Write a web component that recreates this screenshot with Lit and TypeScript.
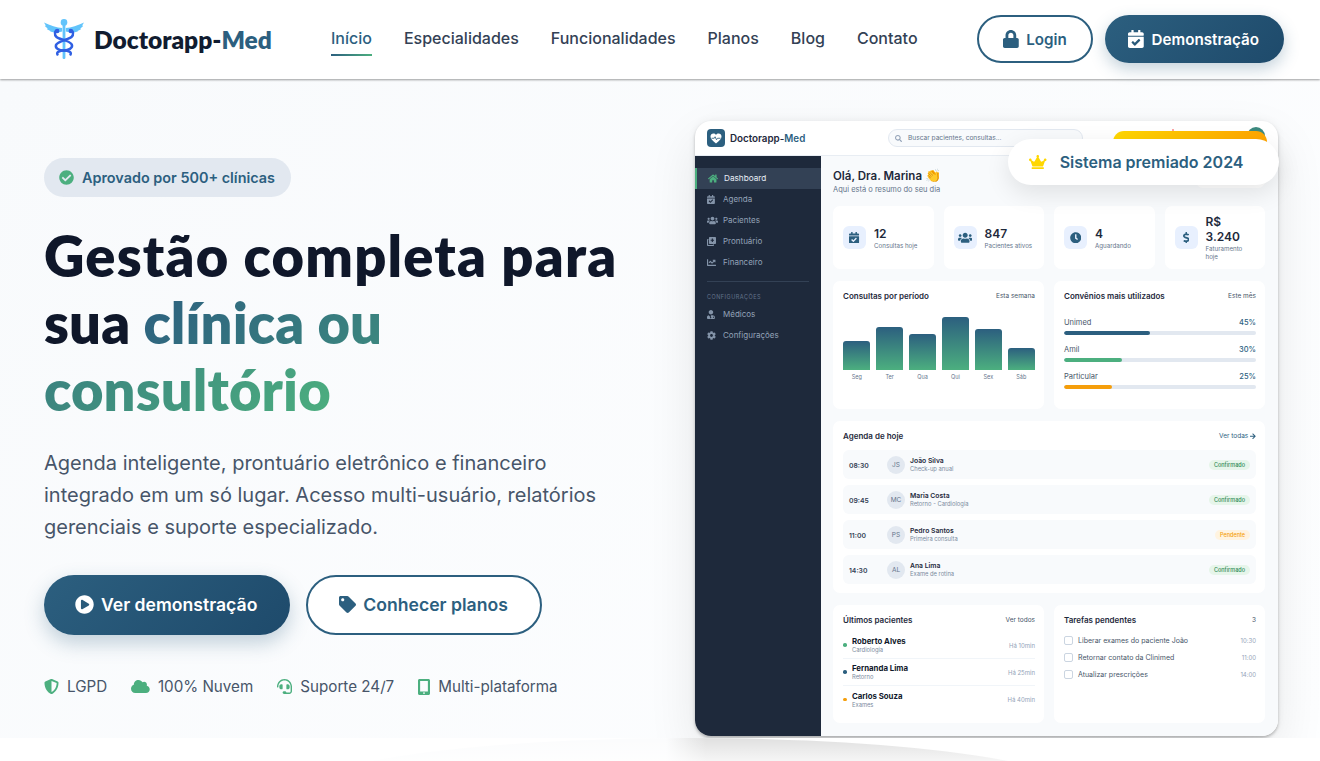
import { LitElement, html, css, svg } from "lit";
import { customElement } from "lit/decorators.js";

const P: Record<string, [string, string]> = {
  lock: ["0 0 448 512", "M400 224h-24v-72C376 68.2 307.8 0 224 0S72 68.2 72 152v72H48c-26.5 0-48 21.5-48 48v192c0 26.5 21.5 48 48 48h352c26.5 0 48-21.5 48-48V272c0-26.5-21.5-48-48-48zm-104 0H152v-72c0-39.7 32.3-72 72-72s72 32.3 72 72v72z"],
  cal: ["0 0 448 512", "M436 160H12c-6.627 0-12-5.373-12-12v-36c0-26.51 21.49-48 48-48h48V12c0-6.627 5.373-12 12-12h40c6.627 0 12 5.373 12 12v52h128V12c0-6.627 5.373-12 12-12h40c6.627 0 12 5.373 12 12v52h48c26.51 0 48 21.49 48 48v36c0 6.627-5.373 12-12 12zM12 192h424c6.627 0 12 5.373 12 12v260c0 26.51-21.49 48-48 48H48c-26.51 0-48-21.49-48-48V204c0-6.627 5.373-12 12-12zm333.296 95.947l-28.169-28.398c-4.667-4.705-12.265-4.736-16.97-.068L194.12 364.665l-45.98-46.352c-4.667-4.705-12.266-4.736-16.971-.068l-28.397 28.17c-4.705 4.667-4.736 12.265-.068 16.97l82.601 83.269c4.667 4.705 12.265 4.736 16.97.068l142.953-141.805c4.705-4.667 4.736-12.265.068-16.97z"],
  home: ["0 0 576 512", "M280.37 148.26L96 300.11V464a16 16 0 0 0 16 16l112.06-.29a16 16 0 0 0 15.92-16V368a16 16 0 0 1 16-16h64a16 16 0 0 1 16 16v95.64a16 16 0 0 0 16 16.05L464 480a16 16 0 0 0 16-16V300L295.67 148.26a12.19 12.19 0 0 0-15.3 0zM571.6 251.47L488 182.56V44.05a12 12 0 0 0-12-12h-56a12 12 0 0 0-12 12v72.61L318.47 43a48 48 0 0 0-61 0L4.34 251.47a12 12 0 0 0-1.6 16.9l25.5 31A12 12 0 0 0 45.15 301l235.22-193.74a12.19 12.19 0 0 1 15.3 0L530.9 301a12 12 0 0 0 16.9-1.6l25.5-31a12 12 0 0 0-1.7-16.93z"],
  users: ["0 0 640 512", "M96 224c35.3 0 64-28.7 64-64s-28.7-64-64-64-64 28.7-64 64 28.7 64 64 64zm448 0c35.3 0 64-28.7 64-64s-28.7-64-64-64-64 28.7-64 64 28.7 64 64 64zm32 32h-64c-17.6 0-33.5 7.1-45.1 18.6 40.3 22.1 68.9 62 75.1 109.4h66c17.7 0 32-14.3 32-32v-32c0-35.3-28.7-64-64-64zm-256 0c61.9 0 112-50.1 112-112S381.9 32 320 32 208 82.1 208 144s50.1 112 112 112zm76.8 32h-8.3c-20.8 10-43.9 16-68.5 16s-47.6-6-68.5-16h-8.3C179.6 288 128 339.6 128 403.2V432c0 26.5 21.5 48 48 48h288c26.5 0 48-21.5 48-48v-28.8c0-63.6-51.6-115.2-115.2-115.2zm-223.7-13.4C161.5 263.1 145.6 256 128 256H64c-35.3 0-64 28.7-64 64v32c0 17.7 14.3 32 32 32h65.9c6.3-47.4 34.9-87.3 75.2-109.4z"],
  clock: ["0 0 512 512", "M256,8C119,8,8,119,8,256S119,504,256,504,504,393,504,256,393,8,256,8Zm92.49,313h0l-20,25a16,16,0,0,1-22.49,2.5h0l-67-49.72a40,40,0,0,1-15-31.23V112a16,16,0,0,1,16-16h32a16,16,0,0,1,16,16V256l58,42.5A16,16,0,0,1,348.49,321Z"],
  dollar: ["0 0 288 512", "M209.2 233.4l-108-31.6C88.7 198.2 80 186.5 80 173.5c0-16.3 13.2-29.5 29.5-29.5h66.3c12.2 0 24.2 3.7 34.2 10.5 6.1 4.1 14.3 3.1 19.5-2l34.8-34c7.1-6.9 6.1-18.4-1.8-24.5C238 74.8 207.4 64.1 176 64V16c0-8.8-7.2-16-16-16h-32c-8.8 0-16 7.2-16 16v48h-2.5C45.8 64-5.4 118.7.5 183.6c4.2 46.1 39.4 83.6 83.8 96.6l102.5 30c12.5 3.7 21.2 15.3 21.2 28.3 0 16.3-13.2 29.5-29.5 29.5h-66.3C100 368 88 364.3 78 357.5c-6.1-4.1-14.3-3.1-19.5 2l-34.8 34c-7.1 6.9-6.1 18.4 1.8 24.5 24.5 19.2 55.1 29.9 86.5 30v48c0 8.8 7.2 16 16 16h32c8.8 0 16-7.2 16-16v-48.2c46.6-.9 90.3-28.6 105.7-72.7 21.5-61.6-14.6-124.8-72.5-141.7z"],
  check: ["0 0 512 512", "M504 256c0 136.967-111.033 248-248 248S8 392.967 8 256 119.033 8 256 8s248 111.033 248 248zM227.314 387.314l184-184c6.248-6.248 6.248-16.379 0-22.627l-22.627-22.627c-6.248-6.249-16.379-6.249-22.628 0L216 308.118l-70.059-70.059c-6.248-6.248-16.379-6.248-22.628 0l-22.627 22.627c-6.248 6.248-6.248 16.379 0 22.627l104 104c6.249 6.249 16.379 6.249 22.628.001z"],
  play: ["0 0 512 512", "M256 8C119 8 8 119 8 256s111 248 248 248 248-111 248-248S393 8 256 8zm115.7 272l-176 101c-15.8 8.8-35.7-2.5-35.7-21V152c0-18.4 19.8-29.8 35.7-21l176 107c16.4 9.2 16.4 32.9 0 42z"],
  tag: ["0 0 512 512", "M0 252.118V48C0 21.49 21.49 0 48 0h204.118a48 48 0 0 1 33.941 14.059l211.882 211.882c18.745 18.745 18.745 49.137 0 67.882L293.823 497.941c-18.745 18.745-49.137 18.745-67.882 0L14.059 286.059A48 48 0 0 1 0 252.118zM112 64c-26.51 0-48 21.49-48 48s21.49 48 48 48 48-21.49 48-48-21.49-48-48-48z"],
  cloud: ["0 0 640 512", "M537.6 226.6c4.1-10.7 6.4-22.4 6.4-34.6 0-53-43-96-96-96-19.7 0-38.1 6-53.3 16.2C367 64.2 315.3 32 256 32c-88.4 0-160 71.6-160 160 0 2.7.1 5.4.2 8.1C40.2 219.8 0 273.2 0 336c0 79.5 64.5 144 144 144h368c70.7 0 128-57.3 128-128 0-61.9-44-113.6-102.4-125.4z"],
  crown: ["0 0 640 512", "M528 448H112c-8.8 0-16 7.2-16 16v32c0 8.8 7.2 16 16 16h416c8.8 0 16-7.2 16-16v-32c0-8.8-7.2-16-16-16zm64-320c-26.5 0-48 21.5-48 48 0 7.1 1.6 13.7 4.4 19.8L476 239.2c-15.4 9.2-35.3 4-44.2-11.6L350.3 85C361 76.2 368 63 368 48c0-26.5-21.5-48-48-48s-48 21.5-48 48c0 15 7 28.2 17.7 37l-81.5 142.6c-8.9 15.6-28.9 20.8-44.2 11.6l-72.3-43.4c2.7-6 4.4-12.7 4.4-19.8 0-26.5-21.5-48-48-48S0 149.5 0 176s21.5 48 48 48c2.6 0 5.2-.4 7.7-.8L128 416h384l72.3-192.8c2.5.4 5.1.8 7.7.8 26.5 0 48-21.5 48-48s-21.5-48-48-48z"],
  mobile: ["0 0 384 512", "M48 0h288c26.5 0 48 21.5 48 48v416c0 26.5-21.5 48-48 48H48c-26.5 0-48-21.5-48-48V48C0 21.5 21.5 0 48 0zm20 60v340h248V60zM192 420a28 28 0 1 0 0 56 28 28 0 1 0 0-56z"],
  headset: ["0 0 512 512", "M192 208c0-17.67-14.33-32-32-32h-16c-35.35 0-64 28.65-64 64v48c0 35.35 28.65 64 64 64h16c17.67 0 32-14.33 32-32V208zm176 144c35.35 0 64-28.65 64-64v-48c0-35.35-28.65-64-64-64h-16c-17.67 0-32 14.33-32 32v112c0 17.67 14.33 32 32 32h16zM256 0C113.18 0 4.58 118.83 0 256v16c0 8.84 7.16 16 16 16h16c8.84 0 16-7.16 16-16v-16c0-114.69 93.31-208 208-208s208 93.31 208 208h-.12c.08 2.43.12 165.72.12 165.72 0 23.35-18.93 42.28-42.28 42.28H320c0-26.51-21.49-48-48-48h-32c-26.51 0-48 21.49-48 48s21.49 48 48 48h181.72c49.86 0 90.28-40.42 90.28-90.28V256C507.42 118.83 398.82 0 256 0z"],
  shield: ["0 0 512 512", "M466.5 83.7l-192-80a48.15 48.15 0 0 0-36.9 0l-192 80C27.7 91.1 16 108.6 16 128c0 198.5 114.5 335.7 221.5 380.3 11.8 4.9 25.1 4.9 36.9 0C360.1 472.6 496 349.3 496 128c0-19.4-11.7-36.9-29.5-44.3zM256.1 446.3l-.1-381 175.9 73.3c-3.3 151.4-82.1 261.1-175.8 307.7z"],
  chart: ["0 0 512 512", "M496 384H64V80c0-8.84-7.16-16-16-16H16C7.16 64 0 71.16 0 80v336c0 17.67 14.33 32 32 32h464c8.84 0 16-7.16 16-16v-32c0-8.84-7.16-16-16-16zM464 96H345.94c-21.38 0-32.09 25.85-16.97 40.97l32.4 32.4L288 242.75l-73.37-73.37c-12.5-12.5-32.76-12.5-45.25 0l-68.69 68.69c-6.25 6.25-6.25 16.38 0 22.63l22.62 22.62c6.25 6.25 16.38 6.25 22.63 0L192 237.25l73.37 73.37c12.5 12.5 32.76 12.5 45.25 0l96-96 32.4 32.4c15.12 15.12 40.97 4.41 40.97-16.97V112c.01-8.84-7.16-16-15.99-16z"],
  cog: ["0 0 512 512", "M487.4 315.7l-42.6-24.6c4.3-23.2 4.3-47 0-70.2l42.6-24.6c4.9-2.8 7.1-8.6 5.5-14-11.1-35.6-30-67.8-54.7-94.6-3.8-4.1-10-5.1-14.8-2.3L380.8 110c-17.9-15.4-38.5-27.3-60.8-35.1V25.8c0-5.6-3.9-10.5-9.4-11.7-36.7-8.2-74.3-7.8-109.2 0-5.5 1.2-9.4 6.1-9.4 11.7V75c-22.2 7.9-42.8 19.8-60.8 35.1L88.7 85.5c-4.9-2.8-11-1.9-14.8 2.3-24.7 26.7-43.6 58.9-54.7 94.6-1.7 5.4.6 11.2 5.5 14L67.3 221c-4.3 23.2-4.3 47 0 70.2l-42.6 24.6c-4.9 2.8-7.1 8.6-5.5 14 11.1 35.6 30 67.8 54.7 94.6 3.8 4.1 10 5.1 14.8 2.3l42.6-24.6c17.9 15.4 38.5 27.3 60.8 35.1v49.2c0 5.6 3.9 10.5 9.4 11.7 36.7 8.2 74.3 7.8 109.2 0 5.5-1.2 9.4-6.1 9.4-11.7v-49.2c22.2-7.9 42.8-19.8 60.8-35.1l42.6 24.6c4.9 2.8 11 1.9 14.8-2.3 24.7-26.7 43.6-58.9 54.7-94.6 1.5-5.5-.7-11.3-5.6-14.1zM256 336c-44.1 0-80-35.9-80-80s35.9-80 80-80 80 35.9 80 80-35.9 80-80 80z"],
  search: ["0 0 512 512", "M505 442.7L405.3 343c-4.5-4.5-10.6-7-17-7H372c27.6-35.3 44-79.7 44-128C416 93.1 322.9 0 208 0S0 93.1 0 208s93.1 208 208 208c48.3 0 92.7-16.4 128-44v16.3c0 6.4 2.5 12.5 7 17l99.7 99.7c9.4 9.4 24.6 9.4 33.9 0l28.3-28.3c9.4-9.4 9.4-24.6.1-34zM208 336c-70.7 0-128-57.2-128-128 0-70.7 57.2-128 128-128 70.7 0 128 57.2 128 128 0 70.7-57.2 128-128 128z"],
  arrow: ["0 0 448 512", "M190.5 66.9l22.2-22.2c9.4-9.4 24.6-9.4 33.9 0L441 239c9.4 9.4 9.4 24.6 0 33.9L246.6 467.3c-9.4 9.4-24.6 9.4-33.9 0l-22.2-22.2c-9.5-9.5-9.3-25 .4-34.3L311.4 296H24c-13.3 0-24-10.7-24-24v-32c0-13.3 10.7-24 24-24h287.4L190.9 101.2c-9.8-9.3-10-24.8-.4-34.3z"],
  doctor: ["0 0 448 512", "M224 256c70.7 0 128-57.3 128-128S294.7 0 224 0 96 57.3 96 128s57.3 128 128 128zM96 300C40 312 0 360 0 416v48c0 26.5 21.5 48 48 48h352c26.5 0 48-21.5 48-48v-48c0-56-40-104-96-116v52c30 8 48 34 48 62v26h-64v-26c0-18 14-32 32-32v-82c-40-6-100-6-144 0v96a40 40 0 1 1-32 0z"],
  notes: ["0 0 512 512", "M160 0h304c26.5 0 48 21.5 48 48v304c0 26.5-21.5 48-48 48H160c-26.5 0-48-21.5-48-48V48c0-26.5 21.5-48 48-48zm112 88v64h-64v64h64v64h64v-64h64v-64h-64V88zM0 160c0-26.5 21.5-48 48-48h32v64H64v272h272v-16h64v32c0 26.5-21.5 48-48 48H48c-26.5 0-48-21.5-48-48z"],
};

const ic = (n: string, cls = "") =>
  html`<svg class="i ${cls}" viewBox=${P[n][0]} aria-hidden="true"><path fill="currentColor" fill-rule="evenodd" d=${P[n][1]}></path></svg>`;

const caduceus = html`<svg class="cad" viewBox="0 0 40 40" aria-hidden="true">
  ${svg`
  <path fill="#62c4fb" d="M18.2 9 C13 8.6 6 6 0 3.4 L1.8 6.6 L0.8 7 L3.6 9.6 L3 10.2 L6.4 12 L6.2 12.6 L10.2 13.6 C12.5 14 15.5 13.5 18.2 12.6Z"/>
  <path fill="#62c4fb" d="M21.8 9 C27 8.6 34 6 40 3.4 L38.2 6.6 L39.2 7 L36.4 9.6 L37 10.2 L33.6 12 L33.8 12.6 L29.8 13.6 C27.5 14 24.5 13.5 21.8 12.6Z"/>
  <circle cx="20" cy="3.4" r="3.3" fill="#62c4fb"/>
  <rect x="18.6" y="5" width="2.8" height="35" rx="1.2" fill="#62c4fb"/>
  <path fill="none" stroke="#2f5fe3" stroke-width="2.5" stroke-linecap="round" d="M13.5 11.5 C10.5 11 10.2 16 12.5 18 C15 20.3 26 21.3 27.8 25.6 C29.3 29.2 24 31.5 20 31.5 C15 31.5 11 29.5 12 26 C13.2 22.3 25 20.3 27.5 18 C29.8 16 29.5 11 26.5 11.5"/>
  <path fill="none" stroke="#2f5fe3" stroke-width="2.5" stroke-linecap="round" d="M20 31.5 C24 31.5 28 33 26.5 35.5 M20 31.5 C16 31.5 12 33 13.5 35.5"/>
  <circle cx="13.2" cy="12" r="2.2" fill="#2f5fe3"/><circle cx="26.8" cy="12" r="2.2" fill="#2f5fe3"/>
  `}
</svg>`;

const heart = html`<svg class="heart" viewBox="0 0 24 22" aria-hidden="true">
  ${svg`<path fill="#fff" d="M12 21 C5 15.5 1 11.5 1 7 C1 3.5 3.6 1 6.8 1 C8.9 1 10.8 2 12 3.8 C13.2 2 15.1 1 17.2 1 C20.4 1 23 3.5 23 7 C23 11.5 19 15.5 12 21Z"/>
  <path fill="none" stroke="#2c5f7f" stroke-width="1.7" stroke-linejoin="round" d="M3 10.5 H8.5 L10.2 7.5 L13 13.5 L15 10.5 H21"/>`}
</svg>`;

const bars = [
  ["Seg", 29], ["Ter", 43], ["Qua", 36], ["Qui", 53], ["Sex", 41], ["Sáb", 22],
] as const;
const convs = [
  ["Unimed", 45, "#2c5f7f"], ["Amil", 30, "#4caf7f"], ["Particular", 25, "#f59e0b"],
] as const;
const agenda = [
  ["08:30", "JS", "João Silva", "Check-up anual", "Confirmado", "ok"],
  ["09:45", "MC", "Maria Costa", "Retorno - Cardiologia", "Confirmado", "ok"],
  ["11:00", "PS", "Pedro Santos", "Primeira consulta", "Pendente", "wait"],
  ["14:30", "AL", "Ana Lima", "Exame de rotina", "Confirmado", "ok"],
] as const;
const patients = [
  ["Roberto Alves", "Cardiologia", "Há 10min", "#4caf7f"],
  ["Fernanda Lima", "Retorno", "Há 25min", "#2c5f7f"],
  ["Carlos Souza", "Exames", "Há 40min", "#f59e0b"],
] as const;
const tasks = [
  ["Liberar exames do paciente João", "10:30"],
  ["Retornar contato da Clinimed", "11:00"],
  ["Atualizar prescrições", "14:00"],
] as const;
const stats = [
  ["cal", "12", "Consultas hoje"],
  ["users", "847", "Pacientes ativos"],
  ["clock", "4", "Aguardando"],
  ["dollar", "R$ 3.240", "Faturamento hoje"],
] as const;
const side = [
  ["home", "Dashboard"], ["cal", "Agenda"], ["users", "Pacientes"], ["notes", "Prontuário"], ["chart", "Financeiro"],
] as const;

@customElement("app-root")
export class AppRoot extends LitElement {
  static styles = css`
    :host { display: block; height: 761px; overflow: hidden; background: #fff; font-family: Inter, "Noto Sans", sans-serif; color: #0f172a; }
    * { box-sizing: border-box; }
    .i { display: block; flex: none; height: 1em; width: auto; }
    .top { height: 79px; display: flex; align-items: center; padding: 0 36px 1px 44px; background: #fff; box-shadow: 0 1px 2px rgba(0,0,0,.38); position: relative; z-index: 3; }
    .brand { display: flex; align-items: center; gap: 10px; width: 228px; flex: none; font: 800 24.5px Lato, sans-serif; color: #111c30; white-space: nowrap; }
    .brand b { color: #2c5f7f; font-weight: 800; }
    .cad { width: 40px; height: 40px; flex: none; }
    .nav { margin: 0 0 2px 59px; display: flex; gap: 32px; font-size: 16px; font-weight: 500; color: #334155; }
    .nav a { position: relative; padding: 8px 0; line-height: 19px; }
    .nav a.on { color: #2c5f7f; }
    .nav a.on::after { content: ""; position: absolute; left: 0; right: 0; bottom: 0; height: 2px; background: linear-gradient(90deg,#2c5f7f,#4caf7f); }
    .acts { margin-left: auto; display: flex; gap: 12px; }
    .btn { display: flex; align-items: center; height: 48px; border-radius: 24px; font-size: 15.2px; font-weight: 600; }
    .btn .i { font-size: 18px; }
    .btn.line { border: 2px solid #2c5f7f; color: #2c5f7f; background: #fff; padding: 0 24px 0 24px; gap: 7px; }
    .btn.fill, .big.fill { background: linear-gradient(135deg,#2c5f7f,#1e4a6b); color: #fff; }
    .btn.fill { box-shadow: 0 6px 16px rgba(44,95,127,.28); padding: 0 25px 0 23px; gap: 8px; }

    .hero { height: 659px; display: grid; grid-template-columns: 1fr 583px; padding: 42px 42px 2px 44px; background: linear-gradient(135deg,#f8fafc,#fdfeff); overflow: hidden; position: relative; }
    .left { padding-top: 37px; display: flex; flex-direction: column; align-items: flex-start; }
    .pill { display: flex; align-items: center; gap: 8px; height: 39px; padding: 0 16px 0 15px; border-radius: 20px; background: #e2e8f0; color: #2c5f7f; font-size: 14.4px; font-weight: 600; }
    .pill .i { color: #4caf7f; font-size: 15px; }
    h1 { margin: 25px 0 0; font: 800 56px/67.2px Lato, sans-serif; color: #0f172a; letter-spacing: .15px; white-space: nowrap; }
    h1 .l1 { display: block; letter-spacing: 1.2px; }
    h1 .grad { background: linear-gradient(135deg,#2c5f7f,#4caf7f); -webkit-background-clip: text; background-clip: text; color: transparent; }
    .lead { margin: 23px 0 0; width: 570px; font-size: 20px; line-height: 32px; color: #475569; }
    .cta { display: flex; gap: 16px; margin-top: 32px; }
    .big { display: flex; align-items: center; height: 60px; border-radius: 30px; font-size: 17.6px; font-weight: 600; gap: 7px; }
    .big .i { font-size: 19px; }
    .big.fill { padding: 0 33px 0 31px; box-shadow: 0 8px 20px rgba(44,95,127,.28); }
    .big.line { border: 2px solid #2c5f7f; color: #2c5f7f; background: #fff; padding: 0 32px 0 31px; }
    .big.line .i { font-size: 17px; }
    .trust { display: flex; gap: 24px; margin-top: 42px; font-size: 15.2px; color: #475569; line-height: 20px; }
    .trust div { display: flex; align-items: center; gap: 8px; }
    .trust .i { color: #4caf7f; font-size: 15px; }
    .trust .i.m { font-size: 16px; }

    .wrap { position: relative; height: 615px; }
    .mock { height: 615px; border-radius: 16px; background: #fff; overflow: hidden; display: flex; flex-direction: column; box-shadow: 0 2px 3px rgba(0,0,0,.24), 0 0 8px rgba(0,0,0,.06), 0 20px 50px rgba(0,0,0,.09); font-size: 8px; }
    .award { position: absolute; z-index: 2; top: 18px; right: -1px; height: 46px; display: flex; align-items: center; gap: 13px; padding: 0 35.5px 1px 21px; background: #fff; border-radius: 23px; box-shadow: 0 8px 24px rgba(0,0,0,.1); color: #2c5f7f; font-size: 16px; font-weight: 600; white-space: nowrap; }
    .award .i { color: #ffd700; font-size: 14px; }
    .mtop { height: 35px; flex: none; display: flex; align-items: center; padding: 0 12px; border-bottom: 1px solid #e8edf3; position: relative; }
    .mlogo { width: 18px; height: 18px; border-radius: 4px; background: #2c5f7f; display: flex; align-items: center; justify-content: center; margin-right: 5px; }
    .heart { width: 12px; height: 11px; }
    .mname { font-size: 9.8px; font-weight: 600; color: #1e293b; width: 158px; white-space: nowrap; }
    .mname b { color: #2c5f7f; font-weight: 600; }
    .search { width: 195px; height: 18px; border: 1px solid #e2e8f0; border-radius: 9px; background: #f8fafc; display: flex; align-items: center; gap: 6px; padding: 0 6px; color: #64748b; font-size: 6.6px; }
    .search .i { font-size: 7px; color: #94a3b8; }
    .gold { margin-left: 30px; width: 154px; height: 22px; border-radius: 11px; background: linear-gradient(90deg,#ffd700,#ffa500); position: relative; z-index: 1; margin-top: 8px; flex: none; color: #fff; font-size: 7px; font-weight: 600; display: flex; align-items: center; justify-content: center; }
    .gold::before { content: ""; position: absolute; left: 59px; top: -2px; width: 2px; height: 2px; background: #fca5a5; }
    .ava { width: 18px; height: 18px; border-radius: 50%; background: #3d8a80; margin-left: -20px; flex: none; margin-top: -4px; }
    .mbody { flex: 1; display: flex; min-height: 0; }
    .sb { width: 126px; flex: none; background: #1e293b; padding-top: 12px; color: #94a3b8; font-size: 8px; }
    .si { height: 21px; display: flex; align-items: center; padding: 0 0 1px 12px; }
    .si .icb { width: 16px; flex: none; display: flex; justify-content: flex-start; }
    .si .i { font-size: 9px; color: #8494a9; max-width: 11px; }
    .si.on { background: #334155; color: #e8eef5; border-left: 2px solid #4caf7f; padding-left: 11px; font-size: 8.2px; }
    .si.on .i { color: #4caf7f; }
    .div { height: 1px; margin: 8px 12px 10px 12px; background: #334155; }
    .sl { height: 10px; line-height: 10px; padding-left: 12px; font-size: 5.5px; letter-spacing: .5px; color: #64748b; margin-bottom: 2px; }
    .main { flex: 1; min-width: 0; background: #f8fafc; padding: 13px 13px 0 12px; display: flex; flex-direction: column; gap: 12px; }
    .hi { height: 25px; display: flex; justify-content: space-between; }
    .hi h2 { margin: 0; font-size: 11.5px; line-height: 15px; font-weight: 600; color: #1e293b; }
    .hi h2 span { font-size: 13px; line-height: 13px; }
    .hi p { margin: 1px 0 0; font-size: 7.5px; line-height: 10px; color: #64748b; }
    .date { height: 15px; margin-top: 4px; padding: 0 6px; background: #fff; border-radius: 7px; font-size: 7px; line-height: 15px; color: #475569; }
    .stats { display: grid; grid-template-columns: repeat(4,1fr); gap: 10px; height: 63px; }
    .card { background: #fff; border-radius: 7px; }
    .stat { padding: 0 10px; display: flex; align-items: center; gap: 8px; }
    .sic { width: 23px; height: 23px; border-radius: 6px; background: #e8f0fe; color: #2c5f7f; display: flex; align-items: center; justify-content: center; flex: none; }
    .sic .i { font-size: 11.5px; }
    .num { font-size: 12px; line-height: 15px; font-weight: 600; color: #1e293b; }
    .lab { font-size: 6.2px; line-height: 8px; color: #64748b; margin-top: 1px; }
    .row2 { display: grid; grid-template-columns: 1fr 1fr; gap: 10px; }
    .pad { padding: 10px 9px 10px 10px; }
    .hd { height: 10px; display: flex; justify-content: space-between; align-items: center; font-size: 6.5px; color: #475569; }
    .hd strong { font-size: 8px; font-weight: 600; color: #1e293b; }
    .hd .lnk { display: flex; align-items: center; gap: 2px; color: #2c5f7f; }
    .hd .lnk .i { font-size: 6.5px; }
    .chart { height: 128px; }
    .bars { display: grid; grid-template-columns: repeat(6,1fr); gap: 5.5px; align-items: end; margin-top: 5px; height: 64px; }
    .bar { background: linear-gradient(180deg,#2c5f7f,#4caf7f); border-radius: 3px 3px 0 0; }
    .bl { display: grid; grid-template-columns: repeat(6,1fr); gap: 5.5px; text-align: center; font-size: 5.5px; line-height: 8px; color: #64748b; margin-top: 3px; }
    .cv { margin-top: 17px; display: flex; flex-direction: column; gap: 10px; }
    .cl { display: flex; justify-content: space-between; font-size: 7.5px; line-height: 10px; color: #475569; }
    .cl b { font-weight: 500; color: #2c5f7f; }
    .tr { height: 4px; margin-top: 3px; border-radius: 2px; background: #e2e8f0; overflow: hidden; }
    .tr div { height: 100%; border-radius: 2px; }
    .agc { padding-bottom: 9px; }
    .ag { display: flex; flex-direction: column; gap: 6px; margin-top: 9px; }
    .ar { height: 29px; border-radius: 6px; background: #f8fafc; display: flex; align-items: center; padding: 1px 6px 0; }
    .t { width: 38px; font-size: 6.8px; font-weight: 600; color: #334155; flex: none; }
    .av { width: 18px; height: 18px; border-radius: 50%; background: #e2e8f0; color: #64748b; font-size: 6.5px; display: flex; align-items: center; justify-content: center; flex: none; margin-right: 5px; }
    .nm { font-size: 6.8px; line-height: 8.5px; font-weight: 600; color: #1e293b; }
    .sb2 { font-size: 5.8px; line-height: 8px; color: #7b8a9e; }
    .st { margin-left: auto; height: 10px; line-height: 10px; border-radius: 5px; padding: 0 5px; font-size: 5.5px; font-weight: 500; }
    .st.ok { background: #e6f5ea; color: #2e8b57; }
    .st.wait { background: #fff3e0; color: #f59e0b; }
    .bottom { height: 118px; }
    .pr { height: 27px; display: flex; align-items: center; border-bottom: 1px solid #f1f5f9; }
    .pr:last-child { border: 0; }
    .dot { width: 3.5px; height: 3.5px; border-radius: 50%; margin-right: 5.5px; flex: none; }
    .pr .nm { font-size: 7.8px; line-height: 10px; font-weight: 700; color: #0f172a; }
    .ago { margin-left: auto; font-size: 6px; color: #94a3b8; }
    .pl { margin-top: 7px; }
    .tl { margin-top: 7px; }
    .tk { height: 17px; display: flex; align-items: center; font-size: 7px; color: #475569; }
    .cb { width: 9px; height: 9px; border: 1px solid #cbd5e1; border-radius: 2px; margin-right: 5px; flex: none; background: #fff; }
    .tk span:last-child { margin-left: auto; font-size: 6px; color: #94a3b8; }

    .foot { height: 23px; position: relative; overflow: hidden; background: #fff; }
    .swoosh { position: absolute; left: 286px; top: 0; width: 808px; height: 120px; border-radius: 50%; background: linear-gradient(90deg,#fbfcfd 0 47%,#e0e0e0 52%,#e0e0e0 100%); }
    .fade { position: absolute; inset: 0; background: linear-gradient(180deg,rgba(255,255,255,0),rgba(255,255,255,.7)); }
  `;

  render() {
    return html`
      <header class="top">
        <div class="brand">${caduceus}<span>Doctorapp-<b>Med</b></span></div>
        <nav class="nav">
          <a class="on">Início</a><a>Especialidades</a><a>Funcionalidades</a><a>Planos</a><a>Blog</a><a>Contato</a>
        </nav>
        <div class="acts">
          <div class="btn line">${ic("lock")}Login</div>
          <div class="btn fill">${ic("cal")}Demonstração</div>
        </div>
      </header>
      <section class="hero">
        <div class="left">
          <div class="pill">${ic("check")}Aprovado por 500+ clínicas</div>
          <h1><span class="l1">Gestão completa para</span>sua <span class="grad">clínica ou<br />consultório</span></h1>
          <p class="lead">Agenda inteligente, prontuário eletrônico e financeiro integrado em um só lugar. Acesso multi-usuário, relatórios gerenciais e suporte especializado.</p>
          <div class="cta">
            <div class="big fill">${ic("play")}Ver demonstração</div>
            <div class="big line">${ic("tag")}Conhecer planos</div>
          </div>
          <div class="trust">
            <div>${ic("shield")}LGPD</div>
            <div>${ic("cloud")}100% Nuvem</div>
            <div>${ic("headset")}Suporte 24/7</div>
            <div>${ic("mobile", "m")}Multi-plataforma</div>
          </div>
        </div>
        <div class="wrap">
          <div class="mock">
            <div class="mtop">
              <div class="mlogo">${heart}</div>
              <div class="mname">Doctorapp-<b>Med</b></div>
              <div class="search">${ic("search")}Buscar pacientes, consultas...</div>
              <div class="gold">SISTEMA PREMIADO 2024</div>
              <div class="ava"></div>
            </div>
            <div class="mbody">
              <aside class="sb">
                ${side.map(([i, l], k) => html`<div class="si ${k === 0 ? "on" : ""}"><span class="icb">${ic(i)}</span>${l}</div>`)}
                <div class="div"></div>
                <div class="sl">CONFIGURAÇÕES</div>
                <div class="si"><span class="icb">${ic("doctor")}</span>Médicos</div>
                <div class="si"><span class="icb">${ic("cog")}</span>Configurações</div>
              </aside>
              <main class="main">
                <div class="hi">
                  <div><h2>Olá, Dra. Marina <span>👏</span></h2><p>Aqui está o resumo do seu dia</p></div>
                  <div class="date">15 de Maio, 2024</div>
                </div>
                <div class="stats">
                  ${stats.map(([i, n, l]) => html`<div class="card stat"><div class="sic">${ic(i)}</div><div><div class="num">${n}</div><div class="lab">${l}</div></div></div>`)}
                </div>
                <div class="row2">
                  <div class="card pad chart">
                    <div class="hd"><strong>Consultas por período</strong><span>Esta semana</span></div>
                    <div class="bars">${bars.map(([, h]) => html`<div class="bar" style="height:${h}px"></div>`)}</div>
                    <div class="bl">${bars.map(([l]) => html`<span>${l}</span>`)}</div>
                  </div>
                  <div class="card pad">
                    <div class="hd"><strong>Convênios mais utilizados</strong><span>Este mês</span></div>
                    <div class="cv">
                      ${convs.map(([n, p, c]) => html`<div><div class="cl"><span>${n}</span><b>${p}%</b></div><div class="tr"><div style="width:${p}%;background:${c}"></div></div></div>`)}
                    </div>
                  </div>
                </div>
                <div class="card pad agc">
                  <div class="hd"><strong>Agenda de hoje</strong><span class="lnk">Ver todas ${ic("arrow")}</span></div>
                  <div class="ag">
                    ${agenda.map(([t, a, n, s, b, k]) => html`<div class="ar"><div class="t">${t}</div><div class="av">${a}</div><div><div class="nm">${n}</div><div class="sb2">${s}</div></div><div class="st ${k}">${b}</div></div>`)}
                  </div>
                </div>
                <div class="row2 bottom">
                  <div class="card pad">
                    <div class="hd"><strong>Últimos pacientes</strong><span>Ver todos</span></div>
                    <div class="pl">
                      ${patients.map(([n, s, t, c]) => html`<div class="pr"><div class="dot" style="background:${c}"></div><div><div class="nm">${n}</div><div class="sb2">${s}</div></div><div class="ago">${t}</div></div>`)}
                    </div>
                  </div>
                  <div class="card pad">
                    <div class="hd"><strong>Tarefas pendentes</strong><span>3</span></div>
                    <div class="tl">
                      ${tasks.map(([n, t]) => html`<div class="tk"><span class="cb"></span><span>${n}</span><span>${t}</span></div>`)}
                    </div>
                  </div>
                </div>
              </main>
            </div>
          </div>
          <div class="award">${ic("crown")}Sistema premiado 2024</div>
        </div>
      </section>
      <div class="foot"><div class="swoosh"></div><div class="fade"></div></div>
    `;
  }
}
